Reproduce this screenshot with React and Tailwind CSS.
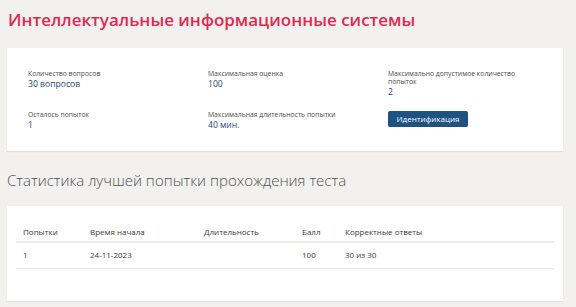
import React from 'react';

const info = [
  { label: 'Количество вопросов', value: '30 вопросов' },
  { label: 'Максимальная оценка', value: '100' },
  { label: 'Максимально допустимое количество попыток', value: '2' },
  { label: 'Осталось попыток', value: '1' },
  { label: 'Максимальная длительность попытки', value: '40 мин.' },
];

const columns = [
  { name: 'Попытки', width: 'w-[67px]' },
  { name: 'Время начала', width: 'w-[114px]' },
  { name: 'Длительность', width: 'w-[98px]' },
  { name: 'Балл', width: 'w-[43px]' },
  { name: 'Корректные ответы', width: '' },
];

const rows = [['1', '24-11-2023', '', '100', '30 из 30']];

const InfoItem = ({ label, value }) => (
  <div className="flex flex-col">
    <span className="text-[6.8px] leading-[8px] text-[#4a4a4a] max-w-[150px]">{label}</span>
    <span className="mt-[1px] text-[8.6px] leading-[10px] font-medium text-[#1f4a78]">{value}</span>
  </div>
);

const App = () => {
  return (
    <div className="min-h-[307px] w-[576px] bg-[#f2f1ef] px-[7px] pt-[8px] pb-[7px] font-['Open_Sans',sans-serif]">
      {/* Title */}
      <h1 className="text-[17px] leading-[24px] font-semibold text-[#e2294f] pl-[1px]">
        Интеллектуальные информационные системы
      </h1>

      {/* Test info */}
      <div className="mt-[16px] w-[556px] bg-white shadow-[0_1px_1px_rgba(0,0,0,0.08)] pl-[21px] pt-[22px] pb-[21px]">
        <div className="grid grid-cols-[180px_180px_150px] gap-y-[14px]">
          <InfoItem {...info[0]} />
          <InfoItem {...info[1]} />
          <InfoItem {...info[2]} />
          <InfoItem {...info[3]} />
          <InfoItem {...info[4]} />
          <div className="flex items-start">
            <button className="flex h-[16px] w-[80px] items-center justify-center rounded-[2px] bg-[#1d5283] text-[8px] leading-none text-white">
              Идентификация
            </button>
          </div>
        </div>
      </div>

      {/* Stats heading */}
      <h2 className="mt-[19px] text-[15px] leading-[20px] font-light text-[#505050]">
        Статистика лучшей попытки прохождения теста
      </h2>

      {/* Stats table */}
      <div className="mt-[16px] w-[556px] bg-white shadow-[0_1px_1px_rgba(0,0,0,0.08)] px-[9px] pt-[16px] pb-[32px]">
        <table className="w-full text-[8px] text-[#3a3a3a] border-collapse">
          <thead>
            <tr className="border-b-2 border-[#eceae8]">
              {columns.map((c) => (
                <th key={c.name} className={`${c.width} text-left font-normal px-[7px] h-[20px]`}>
                  {c.name}
                </th>
              ))}
            </tr>
          </thead>
          <tbody>
            {rows.map((r, i) => (
              <tr key={i} className="border-b border-[#eceae8]">
                {r.map((cell, j) => (
                  <td key={j} className="px-[7px] h-[26px]">{cell}</td>
                ))}
              </tr>
            ))}
          </tbody>
        </table>
      </div>
    </div>
  );
};

export default App;
